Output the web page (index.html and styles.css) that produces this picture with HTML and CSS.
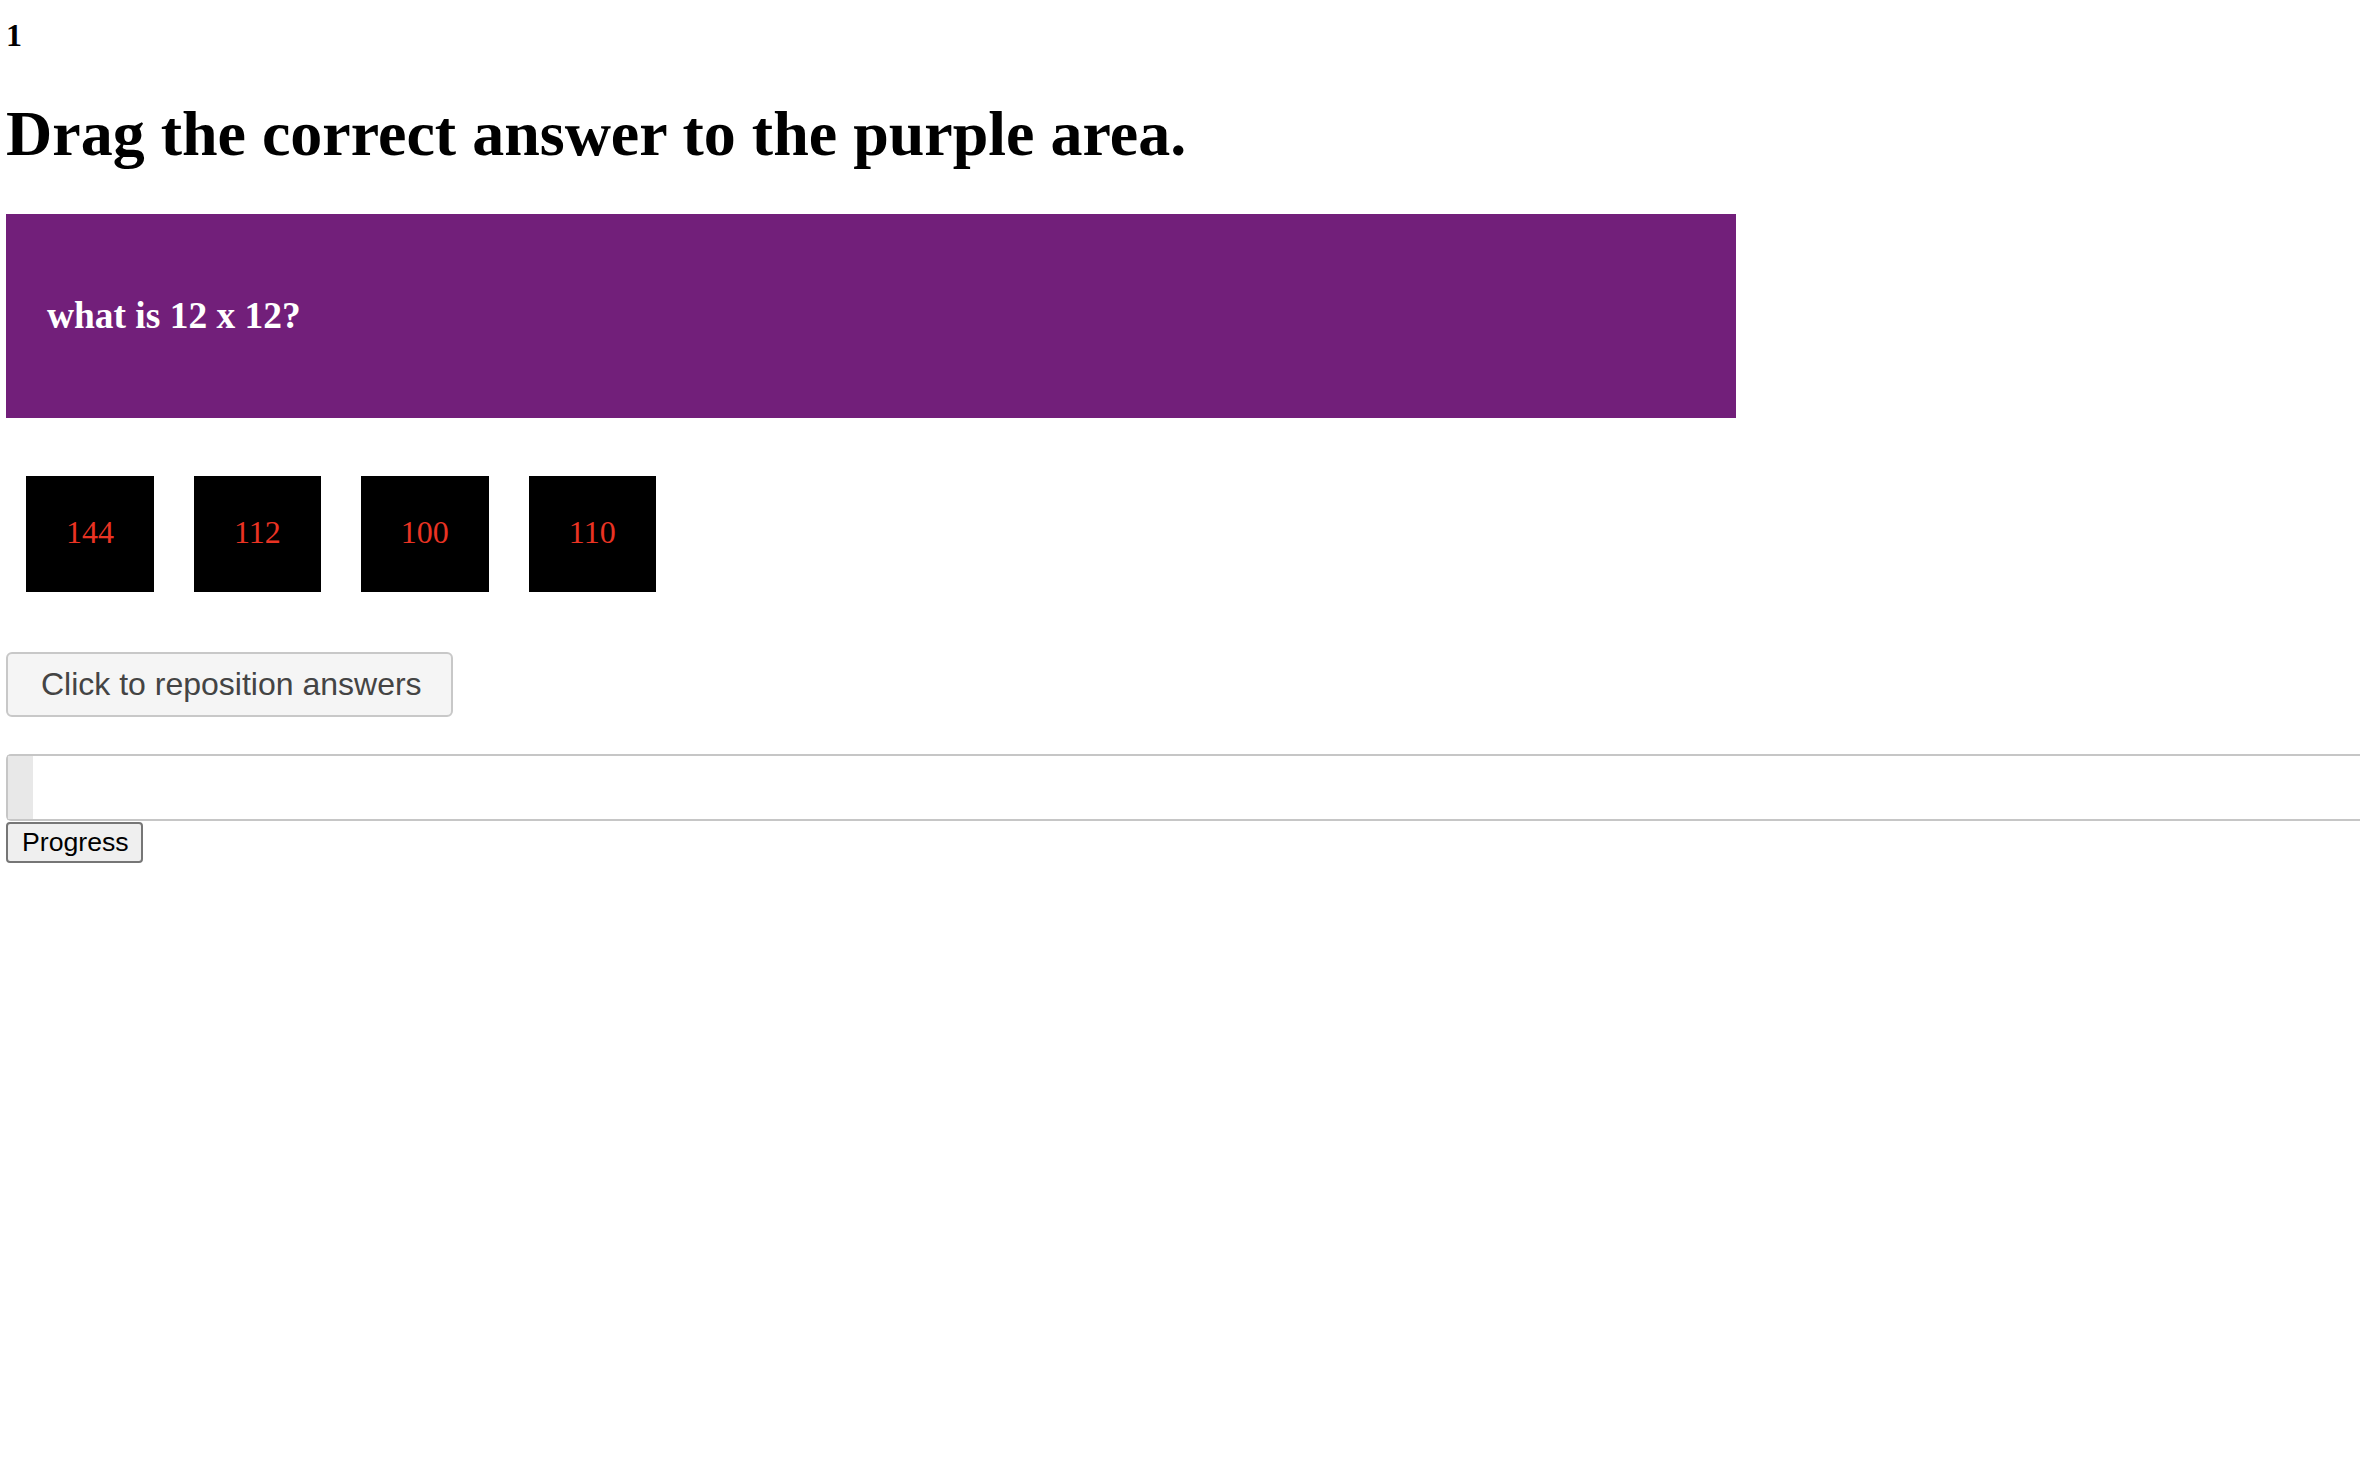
FILE: index.html
```html
<!DOCTYPE html>
<html lang="en">
<head>
<meta charset="utf-8">
<title>Drag the correct answer</title>
<link rel="stylesheet" href="styles.css">
</head>
<body>
<div class="page">
  <div class="counter">1</div>
  <h1 class="title">Drag the correct answer to the purple area.</h1>
  <div class="dropzone">
    <h3 class="question">what is 12 x 12?</h3>
  </div>
  <div class="answers">
    <div class="tile">144</div>
    <div class="tile">112</div>
    <div class="tile">100</div>
    <div class="tile">110</div>
  </div>
  <button class="reposition" type="button">Click to reposition answers</button>
  <div class="progressbar"><div class="progressfill" style="width:25px"></div></div>
  <button class="progressbtn" type="button">Progress</button>
</div>
</body>
</html>
```
FILE: styles.css
```css
html, body {
  margin: 0;
  padding: 0;
  background: #ffffff;
  overflow: hidden;
}
.page {
  padding: 17px 0 0 6px;
  font-family: "Liberation Serif", "Times New Roman", serif;
  color: #000;
}
.counter {
  font-weight: bold;
  font-size: 32px;
  line-height: 36px;
}
.title {
  font-size: 64px;
  font-weight: bold;
  line-height: 72px;
  margin: 45px 0 44px 0;
  white-space: nowrap;
}
.dropzone {
  width: 1730px;
  height: 204px;
  background: #721f7a;
  display: flex;
  align-items: center;
  padding-left: 41px;
  box-sizing: border-box;
}
.question {
  margin: 0;
  color: #ffffff;
  font-size: 37.44px;
  font-weight: bold;
  line-height: 42px;
}
.answers {
  display: flex;
  gap: 40px;
  margin: 58px 0 60px 20px;
}
.tile {
  background: #000;
  color: #ea3323;
  font-size: 32px;
  line-height: 36px;
  padding: 38px 40px 42px 40px;
}
.reposition {
  display: block;
  font-family: "Liberation Sans", Arial, sans-serif;
  font-size: 32px;
  line-height: 37px;
  color: #444444;
  background: #f5f5f5;
  border: 2px solid #c8c8c8;
  border-radius: 6px;
  padding: 12px 33px;
  margin: 0;
  width: 447px;
  box-sizing: border-box;
  white-space: nowrap;
}
.progressbar {
  margin-top: 37px;
  height: 67px;
  width: 2354px;
  box-sizing: border-box;
  border: 2px solid #c6c6c6;
  border-right: none;
  border-radius: 5px 0 0 5px;
  background: #ffffff;
  display: flex;
}
.progressfill {
  height: 100%;
  background: #e8e8e8;
}
.progressbtn {
  display: block;
  margin: 1px 0 0 0;
  font-family: "Liberation Sans", Arial, sans-serif;
  font-size: 26.67px;
  line-height: 31px;
  color: #000;
  background: #efefef;
  border: 2px solid #767676;
  border-radius: 4px;
  padding: 3px 14px;
  width: 137px;
  box-sizing: border-box;
  white-space: nowrap;
}
```
